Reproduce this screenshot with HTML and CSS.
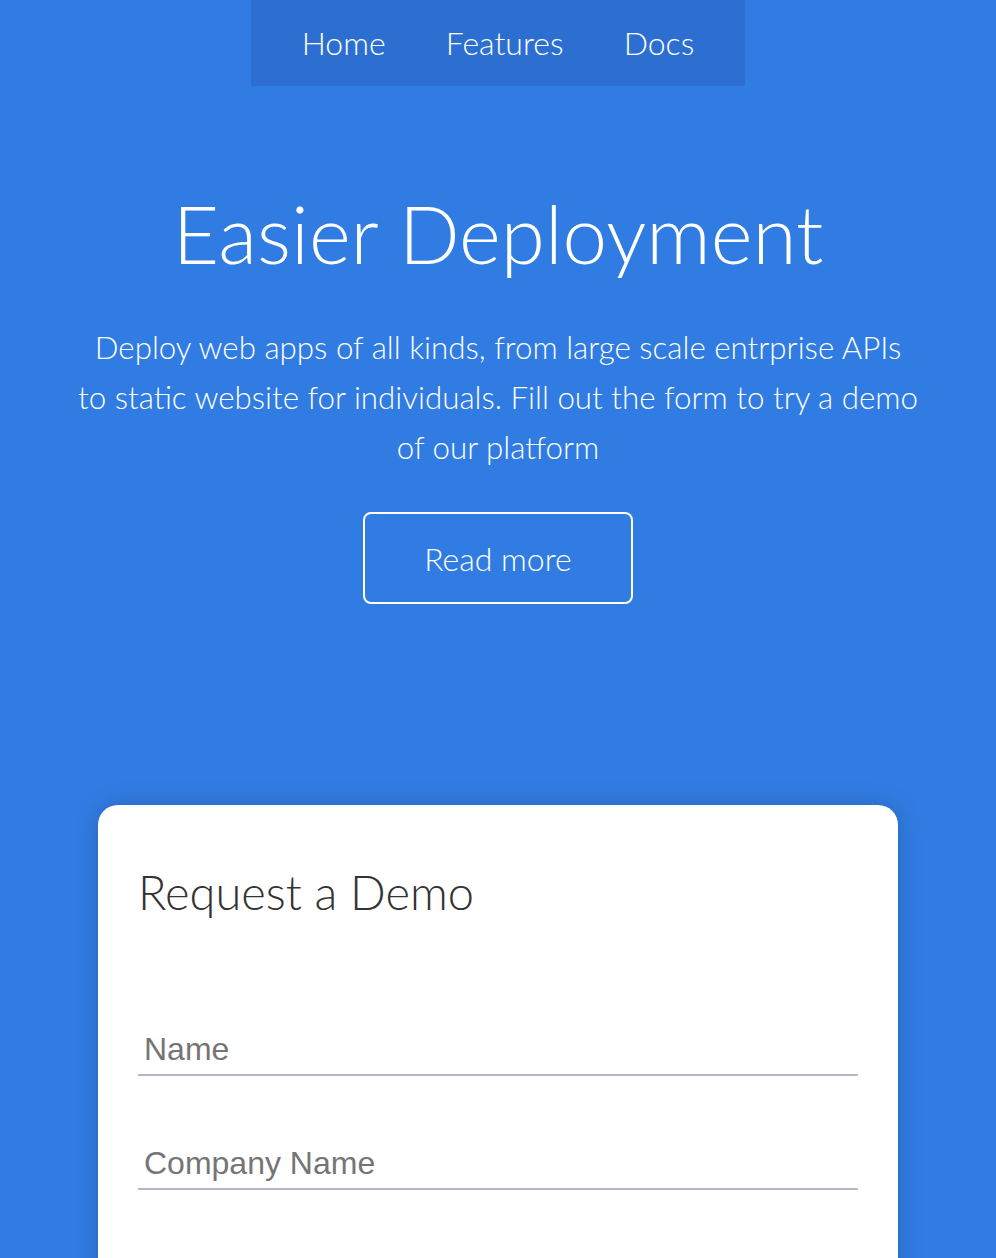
FILE: index.html
```html
<!DOCTYPE html>
<html lang="en">
<head>
<meta charset="utf-8">
<title>Easier Deployment</title>
<link rel="stylesheet" href="styles.css">
</head>
<body>
<header class="top">
  <nav class="nav">
    <a class="nav-link" href="#">Home</a>
    <a class="nav-link" href="#">Features</a>
    <a class="nav-link" href="#">Docs</a>
  </nav>
</header>
<section class="hero">
  <h1 class="hero-title">Easier Deployment</h1>
  <p class="hero-text">Deploy web apps of all kinds, from large scale entrprise APIs to static website for individuals. Fill out the form to try a demo of our platform</p>
  <a class="btn-outline" href="#">Read more</a>
</section>
<section class="card">
  <h2 class="card-title">Request a Demo</h2>
  <form class="form">
    <input class="field" type="text" placeholder="Name">
    <input class="field" type="text" placeholder="Company Name">
    <input class="field" type="email" placeholder="Email">
    <input class="field" type="tel" placeholder="Phone Number">
  </form>
</section>
</body>
</html>
```
FILE: styles.css
```css
html, body {
  margin: 0;
  padding: 0;
}
body {
  background: #317ce3;
  font-family: Lato, "Open Sans", sans-serif;
  font-weight: 300;
  color: #fff;
}
.top {
  display: flex;
  justify-content: center;
}
.nav {
  display: flex;
  background: #2d6fd1;
  padding: 0 21px;
  height: 86px;
  align-items: center;
}
.nav-link {
  color: #fff;
  text-decoration: none;
  font-size: 32px;
  padding: 0 30px;
  line-height: 86px;
}
.hero {
  display: flex;
  flex-direction: column;
  align-items: center;
  text-align: center;
  padding: 0 78px;
}
.hero-title {
  font-weight: 300;
  font-size: 80px;
  line-height: 1.2;
  margin: 99px 0 0;
}
.hero-text {
  font-size: 31.3px;
  line-height: 50px;
  margin: 41px 0 0;
}
.btn-outline {
  display: flex;
  align-items: center;
  justify-content: center;
  box-sizing: border-box;
  width: 270px;
  height: 92px;
  margin-top: 40px;
  border: 2px solid #fff;
  border-radius: 8px;
  color: #fff;
  text-decoration: none;
  font-size: 32px;
}
.card {
  box-sizing: border-box;
  width: 800px;
  margin: 201px auto 0;
  background: #fff;
  border-radius: 20px;
  padding: 59px 40px 60px;
  box-shadow: 0 0 24px rgba(0, 0, 0, 0.18);
  color: #333;
}
.card-title {
  font-weight: 300;
  font-size: 47px;
  line-height: 1.2;
  margin: 0;
}
.form {
  display: flex;
  flex-direction: column;
  gap: 58px;
  margin-top: 100px;
}
.field {
  display: block;
  box-sizing: border-box;
  width: 100%;
  height: 56px;
  border: none;
  border-bottom: 2px solid #bab4c8;
  padding: 4px 6px 0;
  font-family: "Liberation Sans", Arial, sans-serif;
  font-size: 32px;
  color: #333;
  background: transparent;
  outline: none;
}
.field::placeholder {
  color: #757575;
}
```
